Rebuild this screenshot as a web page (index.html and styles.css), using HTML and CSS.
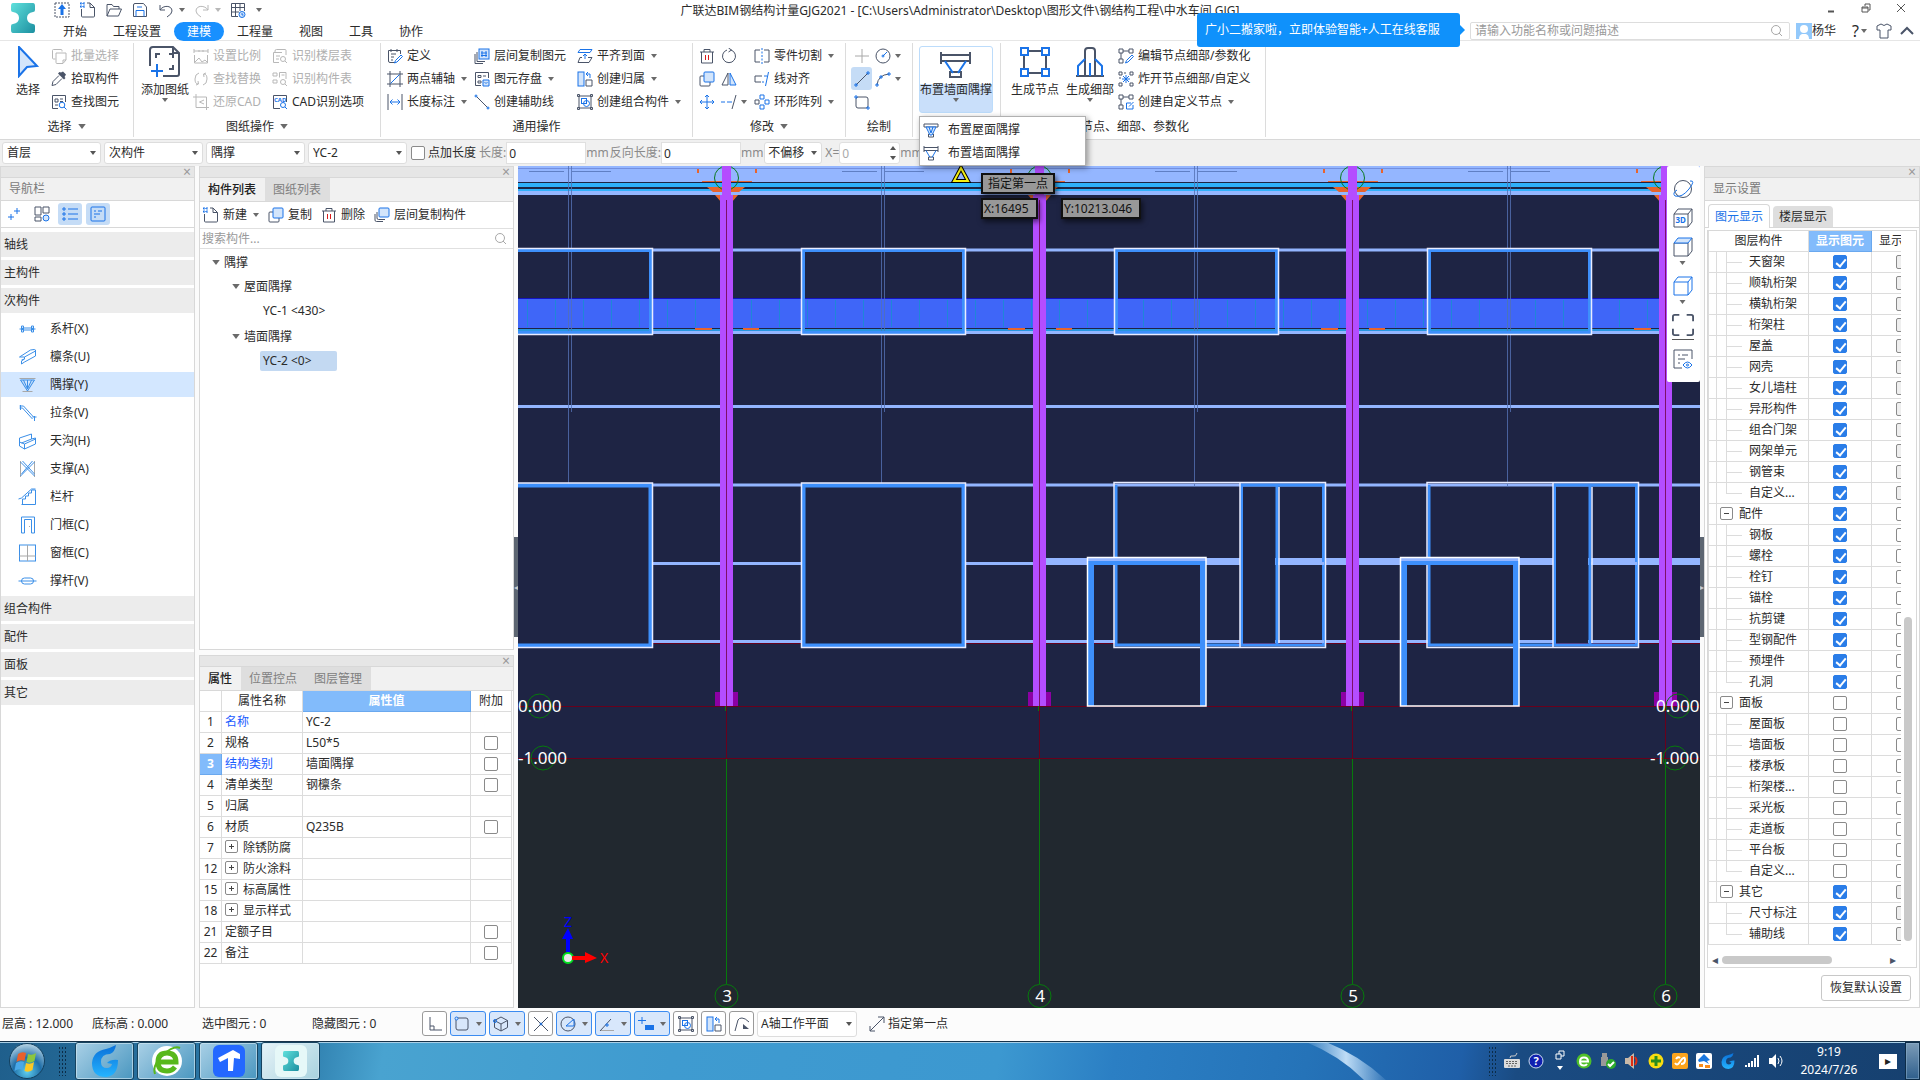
FILE: index.html
```html
<!DOCTYPE html>
<html lang="zh-CN">
<head>
<meta charset="utf-8">
<title>广联达BIM钢结构计量GJG2021</title>
<link rel="stylesheet" href="styles.css">
</head>
<body>
<svg class="defs" aria-hidden="true">
  <defs>
    <linearGradient id="teal" x1="0" y1="0" x2="1" y2="1"><stop offset="0" stop-color="#5fe0dc"/><stop offset="1" stop-color="#1c8fa0"/></linearGradient>
    <linearGradient id="gblue" x1="0" y1="0" x2="0" y2="1"><stop offset="0" stop-color="#0a6fd8"/><stop offset="1" stop-color="#25b4ff"/></linearGradient>
    <radialGradient id="orb" cx=".5" cy=".8" r=".8"><stop offset="0" stop-color="#5fd0f0"/><stop offset=".5" stop-color="#1f6ea8"/><stop offset="1" stop-color="#b9d6e6"/></radialGradient>
    <symbol id="beam" viewBox="0 0 24 30"><path fill="url(#teal)" d="M2 0h20q2 0 2 3v4q0 2-2 2-6 1-6 6t6 6q2 0 2 2v4q0 3-2 3H2q-2 0-2-3v-4q0-2 2-2 6-1 6-6T2 9Q0 9 0 7V3q0-3 2-3z"/></symbol>
    <symbol id="down" viewBox="0 0 6 4"><path fill="currentColor" d="M0 0h6L3 4z"/></symbol>
    <symbol id="i-up" viewBox="0 0 16 16"><rect class="k" x="1" y="1" width="14" height="14" stroke-dasharray="2 1"/><path class="s" d="M8 2l4 5H9.500v6h-3V7H4z"/></symbol>
    <symbol id="i-new" viewBox="0 0 16 16"><path class="k" d="M1.500 7v7q0 1 1 1h11q1 0 1-1V5.500L10 1H7M10 1v4.500h4.500"/><path class="a" d="M0 1.500h5M0 4.500h5M1 0v6M4 0v6" stroke-dasharray="1.500 .8"/></symbol>
    <symbol id="i-open" viewBox="0 0 16 16"><path class="k" d="M1 14V2.500h5l1.500 2H13V7M1 14L4 7h11.500l-3 7z"/></symbol>
    <symbol id="i-save" viewBox="0 0 16 16"><path class="k" d="M1.500 3q0-1.500 1.500-1.500h8.500l3 3.500v9.500h-13z"/><path class="a" d="M4 14.500v-6h8v6M5 5h5"/></symbol>
    <symbol id="i-undo" viewBox="0 0 16 16"><path class="k w" d="M2 3v5h5M2 8c3-5 12-5 12 1q0 3-5 6"/></symbol>
    <symbol id="i-redo" viewBox="0 0 16 16"><path class="k w" d="M14 3v5H9M14 8C11 3 2 3 2 9q0 3 5 6"/></symbol>
    <symbol id="i-grid" viewBox="0 0 16 16"><path class="k" d="M8 14.500H1.500v-13h13V9M1.500 5.500h13M1.500 10H9M5.500 1.500v13M10 1.500V9"/><circle class="a lf" cx="12" cy="12.500" r="3"/><path class="a" d="M12 11v2h1.500"/></symbol>
    <symbol id="i-cursor" viewBox="0 0 32 32"><path class="a w lf" d="M7 1l18 19-10 1-8 9z"/></symbol>
    <symbol id="i-multi" viewBox="0 0 16 16"><path class="k" d="M4.500 11H2.500q-1 0-1-1V2.500q0-1 1-1H10q1 0 1 1v1"/><path class="k" d="M5 5h10v7l-3 3.500H6q-1 0-1-1zM12 15v-3h3"/></symbol>
    <symbol id="i-pick" viewBox="0 0 16 16"><path class="kf" d="M10 1.500l2-1 3 3-1.500 2.500 1 1-1.500 1.500L7 2.500 8.500 1z"/><path class="k" d="M8 4.500L2 10.500l-1 4 4-1 6-6"/></symbol>
    <symbol id="i-find" viewBox="0 0 16 16"><path class="k" d="M7 14.500H1.500v-13h13V8M4 5h3v3H4zM9 5h3M9 7.500h3M4 11h3"/><circle class="a" cx="11" cy="11" r="2.800"/><path class="a" d="M13 13l2.500 2.500"/></symbol>
    <symbol id="i-add" viewBox="0 0 32 32"><path class="k w" d="M14 30H18M1 20V4q0-3 3-3h20l6 6v21q0 2-2 2H18M24 1v6h6"/><path class="k w" d="M7 12V8h4M20 8h4v4M24 19v4h-4"/><path class="a w" d="M8 18v13M2 25h12"/></symbol>
    <symbol id="i-scale" viewBox="0 0 16 16"><path class="k" d="M1 3h14M1 1v4M15 1v4M6 2v2M10 2v2M1.500 7v8h13V7M2 14l4-4 3 4 3-2 2 2"/></symbol>
    <symbol id="i-swap" viewBox="0 0 16 16"><path class="k" d="M6 2Q2 3 2 8t3 5M3 14l2.500-1L5 10M10 14q4-1 4-6t-3-5M13 2l-2.500 1L11 6"/></symbol>
    <symbol id="i-crop" viewBox="0 0 16 16"><path class="k" d="M3 0v13.500h13M0 3h13.500v13M11 6L6.500 8 11 10"/></symbol>
    <symbol id="i-sheet" viewBox="0 0 16 16"><path class="k" d="M3 4.500V3q0-1.500 1.500-1.500H13q1 0 1 1V7M7 14.500H1.500v-10H10M4 8h4M4 11h3"/><circle class="k" cx="11" cy="11" r="2.500"/><path class="k" d="M13 13l2 2"/></symbol>
    <symbol id="i-comp" viewBox="0 0 16 16"><path class="k" d="M1 2h4v3H1zM1 9h4v3H1zM7.500 1.500H14V8M7.500 1.500v5M9.500 4h3"/><circle class="k" cx="11" cy="11" r="2.500"/><path class="k" d="M13 13l2 2"/></symbol>
    <symbol id="i-cad" viewBox="0 0 16 16"><path class="k" d="M8 14.500H1.500v-13h13V8"/><text class="mini" x="2" y="7.500">CAD</text><circle class="a" cx="11" cy="11" r="2.500"/><path class="a" d="M13 13l2 2"/></symbol>
    <symbol id="i-def" viewBox="0 0 16 16"><path class="k" d="M8 14.500H3q-1.500 0-1.500-1.500V2.500h12V6M4 6h5M4 9h3M4 12h2M4 1v3M10 1v3"/><path class="a" d="M14 7l1.500 1.500L10 14l-2.500 1 1-2.500z"/></symbol>
    <symbol id="i-axis" viewBox="0 0 16 16"><path class="k" d="M3 0v16M0 3h16M0 13h16M13 0v16"/><path class="a w" d="M3.500 12.500l9-9"/></symbol>
    <symbol id="i-dim" viewBox="0 0 16 16"><path class="k" d="M1 0v16M15 0v16"/><path class="a w" d="M3 8h10M5.500 5.500L3 8l2.500 2.500M10.500 5.500L13 8l-2.500 2.500"/></symbol>
    <symbol id="i-layers" viewBox="0 0 16 16"><path class="k" d="M3 4v9.500h8M1 6v9.500h8"/><rect class="a lf" x="5" y="1" width="10" height="10"/><path class="a" d="M8 3v6M12 3v6M7 5h6M7 7.500h6"/></symbol>
    <symbol id="i-layers2" viewBox="0 0 16 16"><path class="k" d="M3 5v6q0 1.500 1.500 1.500H11M1 7v6q0 1.500 1.500 1.500H9"/><rect class="a lf" x="5" y="1" width="10" height="9" rx="1"/></symbol>
    <symbol id="i-store" viewBox="0 0 16 16"><path class="k" d="M7 14.500H1.500v-13h13V7M4 4.500h3v2H4zM4 10h3v2H4zM9 5h3"/><path class="a lf" d="M9 9h6v6H9zM10.500 11l1.500 1.500L13.500 11"/></symbol>
    <symbol id="i-aux" viewBox="0 0 16 16"><path class="k" d="M2 2l12 12"/><circle class="a lf" cx="2" cy="2" r="1"/><circle class="a lf" cx="14" cy="14" r="1"/></symbol>
    <symbol id="i-align" viewBox="0 0 16 16"><path class="a" d="M3 1.500h12l-2 3H1z"/><path class="a" d="M8 11V6M6 8l2-2 2 2"/><path class="k" d="M5 9.500H3l-2 5h11l3-5h-4"/></symbol>
    <symbol id="i-belong" viewBox="0 0 16 16"><rect class="a lf" x="1" y="1" width="6" height="14"/><path class="k" d="M9 15V9h6v6z"/><path class="a" d="M9 3h4v4M11 1L9 3l2 2"/></symbol>
    <symbol id="i-combo" viewBox="0 0 16 16"><rect class="k" x="2" y="2" width="12" height="12"/><path class="k" d="M.5.500h2v2h-2zM13.500.500h2v2h-2zM.5 13.500h2v2h-2zM13.500 13.500h2v2h-2z"/><rect class="a" x="4.500" y="4.500" width="5" height="5"/><circle class="a" cx="9.500" cy="9.500" r="3"/></symbol>
    <symbol id="i-trash" viewBox="0 0 16 16"><path class="k" d="M1 4h14M5 4V1.500h6V4M2.500 4v11h11V4"/><path class="r" d="M6.500 7v5M9.500 7v5"/></symbol>
    <symbol id="i-rot" viewBox="0 0 16 16"><path class="k" d="M10 2A6.500 6.500 0 1 1 6 2M7.500 0l3 2-3 2"/></symbol>
    <symbol id="i-copy" viewBox="0 0 16 16"><path class="k" d="M5 5H2q-1 0-1 1v8q0 1 1 1h8q1 0 1-1v-3"/><rect class="a lf" x="5" y="1" width="10" height="10" rx="1"/></symbol>
    <symbol id="i-mirror" viewBox="0 0 16 16"><path class="k" d="M7 2v12H1z"/><path class="a lf" d="M9 2v12h6z"/></symbol>
    <symbol id="i-move" viewBox="0 0 16 16"><path class="a" d="M8 1v14M1 8h14M6 3l2-2 2 2M6 13l2 2 2-2M3 6L1 8l2 2M13 6l2 2-2 2"/></symbol>
    <symbol id="i-ext" viewBox="0 0 16 16"><path class="a" d="M0 8h4M6 8h5"/><path class="k" d="M15 1l-4 14"/></symbol>
    <symbol id="i-cut" viewBox="0 0 16 16"><path class="k" d="M6 2H1v12h5M10 2h5v12h-5"/><path class="a" d="M8 0v16" stroke-dasharray="2 1.500"/></symbol>
    <symbol id="i-line" viewBox="0 0 16 16"><path class="k" d="M8 5H1v6h6"/><path class="a" d="M10 5h3M14.500 1l-3 14M8 11h2"/></symbol>
    <symbol id="i-ring" viewBox="0 0 16 16"><path class="a" d="M6 1h4v4H6zM11 6h4v4h-4zM6 11h4v4H6z"/><path class="k" d="M1 6h4v4H1z"/></symbol>
    <symbol id="i-pt" viewBox="0 0 16 16"><path class="g" d="M8 1v14M1 8h14"/></symbol>
    <symbol id="i-circ" viewBox="0 0 16 16"><circle class="k" cx="8" cy="8" r="7"/><path class="a" d="M8 8l4-4"/><circle class="a" cx="8" cy="8" r="1"/></symbol>
    <symbol id="s-circ" viewBox="0 0 16 16"><circle class="k" cx="8" cy="8" r="7"/><path class="a" d="M6 10l8-7v7H6"/></symbol>
    <symbol id="i-seg" viewBox="0 0 16 16"><path class="k" d="M2 14L14 2"/><path class="a" d="M1 13h2v2H1zM13 1h2v2h-2z"/></symbol>
    <symbol id="i-arc" viewBox="0 0 16 16"><path class="k" d="M2 14Q3 4 14 3"/><path class="a" d="M1 13h2v2H1zM5 5h2v2H5zM13 2h2v2h-2z"/></symbol>
    <symbol id="i-rect" viewBox="0 0 16 16"><rect class="k" x="2" y="3" width="12" height="11" rx="2"/><path class="a" d="M1 2h2v2H1zM13 13h2v2h-2z"/></symbol>
    <symbol id="i-brace" viewBox="0 0 32 32"><path class="k w" d="M1 5v12M30 5v12M1 8h29M1 14h29M10 25h11v5H10z"/><path class="a w" d="M5 14l8 12M26 14l-8 12"/></symbol>
    <symbol id="i-brace2" viewBox="0 0 16 16"><path class="k" d="M1 2h14v3H1zM5.500 15h5v-3h-5z"/><path class="a lf" d="M3 5l4 8h2l4-8zM6 5l2 6 2-6"/></symbol>
    <symbol id="i-brace3" viewBox="0 0 16 16"><path class="k" d="M1 1v6M15 1v6M1 2.500h14M1 5.500h14M5.500 12h5v3h-5z"/><path class="a" d="M3 5.500l4 7M13 5.500l-4 7"/></symbol>
    <symbol id="i-node" viewBox="0 0 32 32"><path class="k w" d="M9 5h14M5 9v14M27 9v14M9 27h14"/><path class="a w" d="M2 2h7v7H2zM23 2h7v7h-7zM2 23h7v7H2zM23 23h7v7h-7z"/></symbol>
    <symbol id="i-detail" viewBox="0 0 32 32"><path class="k w" d="M2 30h28M11 30V5q0-3 3-3h4q3 0 3 3v25"/><path class="a w" d="M4 30V20l7-7M28 30V20l-7-7M16 17v13"/></symbol>
    <symbol id="i-edn" viewBox="0 0 16 16"><path class="k" d="M1 1h4v4H1zM11 1h4v4h-4zM1 11h4v4H1zM5 3h6M3 5v6"/><path class="a" d="M14 7l1.500 1.500L10 14l-2.500 1 1-2.500z"/></symbol>
    <symbol id="i-cdn" viewBox="0 0 16 16"><path class="k" d="M1 1h4v4H1zM11 1h4v4h-4zM1 11h4v4H1zM5 3h6M3 5v6"/><path class="a" d="M13 9H8.500v6H15v-4M11 12.500L15.500 8"/></symbol>
    <symbol id="i-exn" viewBox="0 0 16 16"><path class="k" d="M1 1h3v3H1zM12 1h3v3h-3zM1 12h3v3H1zM12 12h3v3h-3zM6 2h2M2 6v2"/><path class="a" d="M5 5l6 6M11 5l-6 6M8 4v8M4 8h8"/></symbol>
    <symbol id="i-q" viewBox="0 0 16 16"><circle class="g" cx="7" cy="7" r="4.500"/><path class="g" d="M10 10l3 3"/></symbol>
    <symbol id="i-shirt" viewBox="0 0 16 16"><path class="k" d="M5 1q3 3 6 0l4 2v4h-3v8H4V7H1V3z"/></symbol>
    <symbol id="i-cards" viewBox="0 0 16 16"><path class="k" d="M1 1h6v8H1zM9 1h6v6H9zM1 11h6v4H1z"/><circle class="a lf" cx="12" cy="12" r="3"/></symbol>
    <symbol id="i-list" viewBox="0 0 16 16"><path class="a" d="M6 3h10M6 8h10M6 13h10M1 2h2v2H1zM1 7h2v2H1zM1 12h2v2H1z"/></symbol>
    <symbol id="i-doc" viewBox="0 0 16 16"><rect class="a" x="1" y="1" width="14" height="14" rx="1"/><path class="a" d="M4 5h2M8 5h4M4 8h6M4 11h2"/></symbol>
    <symbol id="i-plus2" viewBox="0 0 16 16"><path class="a" d="M11 2v6M8 5h6M5 8v6M2 11h6"/></symbol>
    <symbol id="n1" viewBox="0 0 18 18"><path class="n" d="M1 9h2M15 9h2M4 8h10v2H4zM3 6h2v6H3zM13 6h2v6h-2z"/></symbol>
    <symbol id="n2" viewBox="0 0 18 18"><path class="n" d="M1 9L12 2q5-1 5 0v6L6 14l-3 2v-3l3-2-3 1M1 9h5v2M6 9l11-6"/></symbol>
    <symbol id="n3" viewBox="0 0 18 18"><path class="g" d="M1 2.500h16M4 15.500h10"/><path class="n nf" d="M2 4h14L9 15zM5 4l4 9 4-9M9 4v9"/></symbol>
    <symbol id="n4" viewBox="0 0 18 18"><path class="n" d="M1 2h4l10 11M1 4h3l10 11M2 1v5M16 12v5M14 13h4"/></symbol>
    <symbol id="n5" viewBox="0 0 18 18"><path class="n" d="M1 6l12-4v5l4-1v6l-11 5-5-3zM1 10l5 2 11-5M6 12v5M13 7L3 11"/></symbol>
    <symbol id="n6" viewBox="0 0 18 18"><path class="g" d="M2 1v16M16 1v16"/><path class="n" d="M2 2l14 14M4 1l12 13M16 2L2 16M14 1L3 14"/></symbol>
    <symbol id="n7" viewBox="0 0 18 18"><path class="n" d="M3 16.500h14V2h-4v3h-3v3H7v3H4v5M0 11l3-1L13 1h4"/></symbol>
    <symbol id="n8" viewBox="0 0 18 18"><path class="n" d="M3 17V1h13v16h-3V3.500H6V17z"/><path class="g" d="M11 10v1"/></symbol>
    <symbol id="n9" viewBox="0 0 18 18"><rect class="n" x="1" y="1" width="16" height="16"/><path class="g" d="M9 1v16M1 12h16"/></symbol>
    <symbol id="n10" viewBox="0 0 18 18"><path class="n" d="M0 9h18"/><rect class="n" x="3" y="6" width="12" height="6" rx="3"/></symbol>
    <symbol id="v-orb" viewBox="0 0 22 22"><circle class="k" cx="11" cy="11" r="8.500"/><path class="a w" d="M18 3q6-1-1 8t-14 7q-3-3 2-6"/></symbol>
    <symbol id="v-cube" viewBox="0 0 22 22"><path class="k w" d="M2 7h14v13H2zM2 7l4-5h14v13l-4 5M16 7l4-5"/></symbol>
    <symbol id="v-top" viewBox="0 0 22 22"><path class="k" d="M2 7h14v13H2zM20 2v13l-4 5"/><path class="a lf" d="M2 7l4-5h14l-4 5z"/></symbol>
    <symbol id="v-exp" viewBox="0 0 24 24"><path class="k w" d="M1 8V3q0-2 2-2h5M16 1h5q2 0 2 2v5M23 16v5q0 2-2 2h-5M8 23H3q-2 0-2-2v-5"/></symbol>
    <symbol id="v-eye" viewBox="0 0 22 22"><path class="k" d="M10 20H2V2h18v9M6 7h2M10 7h6M6 11h7M6 15h2"/><path class="a" d="M11 17q4.500-6 9 0-4.500 6-9 0z"/><circle class="a" cx="15.500" cy="17" r="1"/></symbol>
    <symbol id="s-l" viewBox="0 0 16 16"><path class="k" d="M3 1v13h12M3 10h4v4"/></symbol>
    <symbol id="s-sq" viewBox="0 0 16 16"><rect class="k" x="2" y="2" width="12" height="12" rx="2"/><circle class="a lf" cx="2.500" cy="2.500" r="1.500"/></symbol>
    <symbol id="s-cube" viewBox="0 0 16 16"><path class="k" d="M8 1l6.500 3.500v7L8 15l-6.500-3.500v-7zM1.500 4.500L8 8l6.500-3.500M8 8v7"/><circle class="a" cx="2" cy="5" r="1.500"/></symbol>
    <symbol id="s-x" viewBox="0 0 16 16"><path class="k" d="M1 1l14 14M15 1L1 15"/><circle class="a" cx="8" cy="8" r="1"/></symbol>
    <symbol id="s-ang" viewBox="0 0 16 16"><path class="k" d="M1 15L12 3"/><path class="a" d="M7 8h2v2H7z"/><path class="g" d="M2 14.500h13"/></symbol>
    <symbol id="s-pl" viewBox="0 0 16 16"><path class="a" d="M4 1v7M0 4.500h8"/><path class="s" d="M7 9h9v5H7z"/></symbol>
    <symbol id="s-poly" viewBox="0 0 16 16"><path class="k" d="M1 15L4 4q1-2 4-2t7 4"/><path class="kf" d="M9 8l6 5H9z"/></symbol>
    <symbol id="s-pt" viewBox="0 0 16 16"><path class="k" d="M1 15L15 1M9 1h6v6M1 10v5h5"/></symbol>

    <g id="bay">
      <path stroke="#5471b4" opacity=".8" d="M568.500 166V491M571.500 166V412"/>
      <path stroke="#5f7fc4" d="M529 171.500h35M572 171.500h39"/>
      <g fill="#e8642c"><path d="M707 187h38l-6 5h-26zM715 195h23l-6 7h-11z"/><path d="M695 328h17v2h-17zM743 328h16v2h-16zM697 169h2v4h-2zM755 169h2v4h-2zM702 181h50v1h-50z"/></g>
      <ellipse cx="726.500" cy="178" rx="12" ry="12" fill="none" stroke="#0a7a1e"/>
      <path fill="#b44dff" d="M720 195h13v511h-13zM722 166h9v30h-9z"/>
      <path stroke="#7d0f68" d="M726.500 200V706"/>
      <path fill="#8c00a4" d="M715 692h5v14h-5zM733 692h5v14h-5z"/>
      <path stroke="#68001c" d="M726.500 706V759"/><path stroke="#067a0c" d="M726.500 759V984M725.500 706v5"/>
      <circle cx="726.500" cy="996" r="11.500" fill="none" stroke="#067a0c"/>
    </g>
    <g id="win" fill="none"><path stroke="#3d8ffb" stroke-width="3" d="M803.500 250.500h160v82h-160z"/><path stroke="#e9ecff" stroke-width="1.500" d="M801.500 248.500h164v86h-164z"/></g>
    <g id="lowwin"><path fill="#1e2444" stroke="#3d8ffb" stroke-width="4" d="M803.500 485.500h160v160h-160z"/><path fill="none" stroke="#e9ecff" stroke-width="1.500" d="M801.500 483h164v164.500h-164z"/></g>
    <g id="doors" fill="none">
      <path fill="#1e2444" d="M1114 487h126v71h-126zM1117 566h120v79h-120z"/>
      <path stroke="#3d8ffb" stroke-width="3" d="M1116 485V645H1240M1241.500 485h82v160h-82zM1277 485V645"/>
      <path fill="#1e2444" d="M1243 487h32v156h-32z"/>
      <path stroke="#93b5ff" stroke-width="7" d="M1206 561.500h34"/>
      <path stroke="#93b5ff" stroke-width="3" d="M1278 563.500h46M1206 641.500h34M1278 641.500h46"/>
      <path stroke="#e9ecff" stroke-width="1.500" d="M1240 482.500H1114V647.500H1325.500V482.500H1240V647M1279 487V643"/>
      <path stroke="#3d8ffb" stroke-width="6" d="M1091 706V562H1203V706"/>
      <path stroke="#93b5ff" stroke-width="3" d="M1088 559.500H1206"/>
      <path stroke="#ffffff" stroke-width="1.500" d="M1087.500 706V557.500H1206V706z"/>
    </g>
    <pattern id="ticks" x="527" y="300" width="28" height="28" patternUnits="userSpaceOnUse"><path stroke="#1f86d8" d="M.5 0V27"/></pattern>
    <linearGradient id="glow"><stop offset="0" stop-color="#bfe0fb" stop-opacity=".1"/><stop offset=".5" stop-color="#cfe8fd" stop-opacity=".9"/><stop offset="1" stop-color="#bfe0fb" stop-opacity=".1"/></linearGradient>
  </defs>
</svg>

<header class="title">
  <svg class="logo"><use href="#beam"/></svg>
  <div class="title-main">
    <div class="quick">
      <button aria-label="上传"><svg><use href="#i-up"/></svg></button>
      <button aria-label="新建"><svg><use href="#i-new"/></svg></button>
      <button aria-label="打开"><svg><use href="#i-open"/></svg></button>
      <button aria-label="保存"><svg><use href="#i-save"/></svg></button>
      <button class="has-arrow" aria-label="撤销"><svg><use href="#i-undo"/></svg><svg class="dn"><use href="#down"/></svg></button>
      <button class="has-arrow off" aria-label="恢复"><svg><use href="#i-redo"/></svg><svg class="dn"><use href="#down"/></svg></button>
      <button aria-label="表格"><svg><use href="#i-grid"/></svg></button>
      <button aria-label="更多"><svg class="dn"><use href="#down"/></svg></button>
    </div>
    <nav class="tabs">
      <button>开始</button><button>工程设置</button><button class="on">建模</button><button>工程量</button><button>视图</button><button>工具</button><button>协作</button>
    </nav>
  </div>
  <h1>广联达BIM钢结构计量GJG2021 - [C:\Users\Administrator\Desktop\图形文件\钢结构工程\中水车间.GJG]</h1>
  <div class="title-right">
    <div class="winbtns"><button aria-label="最小化"><svg viewBox="0 0 12 12"><path d="M3 9.500h6" stroke-width="2"/></svg></button><button aria-label="还原"><svg viewBox="0 0 12 12"><path d="M2 5h6v5H2zM2 6h6M5 4V2h5v6H8.500"/></svg></button><button aria-label="关闭"><svg viewBox="0 0 12 12"><path d="M2 2l8 8M10 2l-8 8"/></svg></button></div>
    <div class="userbar">
      <div class="search"><input aria-label="搜索" placeholder="请输入功能名称或问题描述"><svg><use href="#i-q"/></svg></div>
      <button class="user"><svg class="avatar" viewBox="0 0 16 16"><path fill="#93c9fb" d="M0 0h16v16H0z"/><circle cx="8" cy="6" r="4" fill="#fff"/><path fill="#fff" d="M3 16q0-4 3-5h4q3 1 3 5z"/></svg>杨华</button>
      <button class="help">?<svg class="dn"><use href="#down"/></svg></button>
      <button aria-label="皮肤"><svg><use href="#i-shirt"/></svg></button>
      <button aria-label="收起"><svg viewBox="0 0 16 16"><path class="k w" d="M2 11l6-6 6 6"/></svg></button>
    </div>
    <a class="bubble" href="#">广小二搬家啦，立即体验智能+人工在线客服</a>
  </div>
</header>

<section class="ribbon">
  <div class="group g1">
    <div class="body">
      <button class="big"><svg><use href="#i-cursor"/></svg>选择</button>
      <div class="cmds">
        <button class="off"><svg><use href="#i-multi"/></svg>批量选择</button>
        <button><svg><use href="#i-pick"/></svg>拾取构件</button>
        <button><svg><use href="#i-find"/></svg>查找图元</button>
      </div>
    </div>
    <button class="cap">选择<svg class="dn"><use href="#down"/></svg></button>
  </div>
  <div class="group g2">
    <div class="body">
      <button class="big"><svg><use href="#i-add"/></svg>添加图纸<svg class="dn"><use href="#down"/></svg></button>
      <div class="cmds">
        <button class="off"><svg><use href="#i-scale"/></svg>设置比例</button><button class="off"><svg><use href="#i-sheet"/></svg>识别楼层表</button>
        <button class="off"><svg><use href="#i-swap"/></svg>查找替换</button><button class="off"><svg><use href="#i-comp"/></svg>识别构件表</button>
        <button class="off"><svg><use href="#i-crop"/></svg>还原CAD</button><button><svg><use href="#i-cad"/></svg>CAD识别选项</button>
      </div>
    </div>
    <button class="cap">图纸操作<svg class="dn"><use href="#down"/></svg></button>
  </div>
  <div class="group g3">
    <div class="body">
      <div class="cmds">
        <button><svg><use href="#i-def"/></svg>定义</button><button><svg><use href="#i-layers"/></svg>层间复制图元</button><button><svg><use href="#i-align"/></svg>平齐到面<svg class="dn"><use href="#down"/></svg></button>
        <button><svg><use href="#i-axis"/></svg>两点辅轴<svg class="dn"><use href="#down"/></svg></button><button><svg><use href="#i-store"/></svg>图元存盘<svg class="dn"><use href="#down"/></svg></button><button><svg><use href="#i-belong"/></svg>创建归属<svg class="dn"><use href="#down"/></svg></button>
        <button><svg><use href="#i-dim"/></svg>长度标注<svg class="dn"><use href="#down"/></svg></button><button><svg><use href="#i-aux"/></svg>创建辅助线</button><button><svg><use href="#i-combo"/></svg>创建组合构件<svg class="dn"><use href="#down"/></svg></button>
      </div>
    </div>
    <div class="cap low">通用操作</div>
  </div>
  <div class="group g4">
    <div class="body">
      <div class="cmds">
        <button aria-label="删除"><svg><use href="#i-trash"/></svg></button><button aria-label="旋转"><svg><use href="#i-rot"/></svg></button><button><svg><use href="#i-cut"/></svg>零件切割<svg class="dn"><use href="#down"/></svg></button>
        <button aria-label="复制"><svg><use href="#i-copy"/></svg></button><button aria-label="镜像"><svg><use href="#i-mirror"/></svg></button><button><svg><use href="#i-line"/></svg>线对齐</button>
        <button aria-label="移动"><svg><use href="#i-move"/></svg></button><button class="tight" aria-label="延伸"><svg><use href="#i-ext"/></svg><svg class="dn"><use href="#down"/></svg></button><button><svg><use href="#i-ring"/></svg>环形阵列<svg class="dn"><use href="#down"/></svg></button>
      </div>
    </div>
    <button class="cap">修改<svg class="dn"><use href="#down"/></svg></button>
  </div>
  <div class="group g5">
    <div class="body">
      <div class="cmds">
        <button class="sq" aria-label="点"><svg><use href="#i-pt"/></svg></button><button class="tight" aria-label="圆"><svg><use href="#i-circ"/></svg><svg class="dn"><use href="#down"/></svg></button>
        <button class="sq on" aria-label="直线"><svg><use href="#i-seg"/></svg></button><button class="tight" aria-label="弧"><svg><use href="#i-arc"/></svg><svg class="dn"><use href="#down"/></svg></button>
        <button class="sq" aria-label="矩形"><svg><use href="#i-rect"/></svg></button>
      </div>
    </div>
    <div class="cap low">绘制</div>
  </div>
  <div class="group g6">
    <div class="body"><button class="big open"><svg><use href="#i-brace"/></svg>布置墙面隅撑<svg class="dn"><use href="#down"/></svg></button></div>
    <div class="menu"><button><svg><use href="#i-brace2"/></svg>布置屋面隅撑</button><button><svg><use href="#i-brace3"/></svg>布置墙面隅撑</button></div>
  </div>
  <div class="group g7">
    <div class="body">
      <button class="big"><svg><use href="#i-node"/></svg>生成节点</button>
      <button class="big"><svg><use href="#i-detail"/></svg>生成细部<svg class="dn"><use href="#down"/></svg></button>
      <div class="cmds">
        <button><svg><use href="#i-edn"/></svg>编辑节点细部/参数化</button>
        <button><svg><use href="#i-exn"/></svg>炸开节点细部/自定义</button>
        <button><svg><use href="#i-cdn"/></svg>创建自定义节点<svg class="dn"><use href="#down"/></svg></button>
      </div>
    </div>
    <div class="cap low">节点、细部、参数化</div>
  </div>
</section>

<section class="options">
  <select class="combo" aria-label="楼层"><option>首层</option></select>
  <select class="combo" aria-label="类别"><option>次构件</option></select>
  <select class="combo" aria-label="构件类型"><option>隅撑</option></select>
  <select class="combo" aria-label="构件"><option>YC-2</option></select>
  <label class="chk"><input type="checkbox">点加长度</label>
  <label class="num">长度:<input value="0"></label><span>mm</span>
  <label class="num">反向长度:<input value="0"></label><span>mm</span>
  <select class="combo small" aria-label="偏移"><option>不偏移</option></select>
  <label class="num spin">X=<input value="0" disabled></label><span>mm</span>
</section>

<main>
  <aside class="panel nav">
    <div class="strip"><button aria-label="关闭">×</button></div>
    <h2>导航栏</h2>
    <div class="navtools">
      <button aria-label="展开"><svg><use href="#i-plus2"/></svg></button>
      <button aria-label="图标"><svg><use href="#i-cards"/></svg></button>
      <button class="on" aria-label="列表"><svg><use href="#i-list"/></svg></button>
      <button class="on" aria-label="详情"><svg><use href="#i-doc"/></svg></button>
    </div>
    <div class="navlist">
      <button class="cat">轴线</button><button class="cat">主构件</button><button class="cat">次构件</button>
      <button><svg><use href="#n1"/></svg>系杆(X)</button>
      <button><svg><use href="#n2"/></svg>檩条(U)</button>
      <button class="sel"><svg><use href="#n3"/></svg>隅撑(Y)</button>
      <button><svg><use href="#n4"/></svg>拉条(V)</button>
      <button><svg><use href="#n5"/></svg>天沟(H)</button>
      <button><svg><use href="#n6"/></svg>支撑(A)</button>
      <button><svg><use href="#n7"/></svg>栏杆</button>
      <button><svg><use href="#n8"/></svg>门框(C)</button>
      <button><svg><use href="#n9"/></svg>窗框(C)</button>
      <button><svg><use href="#n10"/></svg>撑杆(V)</button>
      <button class="cat">组合构件</button><button class="cat">配件</button><button class="cat">面板</button><button class="cat">其它</button>
    </div>
  </aside>

  <div class="mid">
    <section class="panel comps">
      <div class="strip"><button aria-label="关闭">×</button></div>
      <div class="ptabs"><button class="on">构件列表</button><button>图纸列表</button></div>
      <div class="ctools">
        <button><svg><use href="#i-new"/></svg>新建<svg class="dn"><use href="#down"/></svg></button>
        <button><svg><use href="#i-copy"/></svg>复制</button>
        <button><svg><use href="#i-trash"/></svg>删除</button>
        <button><svg><use href="#i-layers2"/></svg>层间复制构件</button>
      </div>
      <div class="csearch"><input aria-label="搜索构件" placeholder="搜索构件..."><svg><use href="#i-q"/></svg></div>
      <ul class="tree">
        <li><svg class="dn"><use href="#down"/></svg>隅撑
          <ul>
            <li><svg class="dn"><use href="#down"/></svg>屋面隅撑<ul><li class="leaf"><span>YC-1 &lt;430&gt;</span></li></ul></li>
            <li><svg class="dn"><use href="#down"/></svg>墙面隅撑<ul><li class="leaf"><span class="sel">YC-2 &lt;0&gt;</span></li></ul></li>
          </ul>
        </li>
      </ul>
    </section>
    <section class="panel props">
      <div class="strip"><button aria-label="关闭">×</button></div>
      <div class="ptabs"><button class="on">属性</button><button>位置控点</button><button>图层管理</button></div>
      <table>
        <colgroup><col class="c-no"><col class="c-name"><col><col class="c-add"></colgroup>
        <thead><tr><th></th><th>属性名称</th><th class="hl">属性值</th><th>附加</th></tr></thead>
        <tbody>
          <tr><td>1</td><td class="blue">名称</td><td>YC-2</td><td></td></tr>
          <tr><td>2</td><td>规格</td><td>L50*5</td><td><input type="checkbox" aria-label="规格附加"></td></tr>
          <tr><td class="hl">3</td><td class="blue">结构类别</td><td>墙面隅撑</td><td><input type="checkbox" aria-label="结构类别附加"></td></tr>
          <tr><td>4</td><td>清单类型</td><td>钢檩条</td><td><input type="checkbox" aria-label="清单类型附加"></td></tr>
          <tr><td>5</td><td>归属</td><td></td><td></td></tr>
          <tr><td>6</td><td>材质</td><td>Q235B</td><td><input type="checkbox" aria-label="材质附加"></td></tr>
          <tr><td>7</td><td><button class="box plus" aria-label="展开"></button>除锈防腐</td><td></td><td></td></tr>
          <tr><td>12</td><td><button class="box plus" aria-label="展开"></button>防火涂料</td><td></td><td></td></tr>
          <tr><td>15</td><td><button class="box plus" aria-label="展开"></button>标高属性</td><td></td><td></td></tr>
          <tr><td>18</td><td><button class="box plus" aria-label="展开"></button>显示样式</td><td></td><td></td></tr>
          <tr><td>21</td><td>定额子目</td><td></td><td><input type="checkbox" aria-label="定额子目附加"></td></tr>
          <tr><td>22</td><td>备注</td><td></td><td><input type="checkbox" aria-label="备注附加"></td></tr>
        </tbody>
      </table>
    </section>
  </div>

  <div class="splitter"><button aria-label="折叠左侧">◂</button></div>

  <div class="canvas">
    <svg class="scene" viewBox="518 166 1182 842" preserveAspectRatio="xMinYMin slice">
      <path fill="#21282f" d="M518 166h1182v842H518z"/>
      <path fill="#1e2444" d="M518 166h1182v593H518z"/>
      <path fill="#94b6ff" d="M518 166h1182v16H518zM518 191h1182v4H518z"/>
      <path stroke="#7390e0" d="M518 168.500h1182"/>
      <path fill="#2fb0fa" d="M518 183h1182v4H518zM518 189h1182v2H518z"/>
      <path fill="#3f66f8" d="M518 299h1182v29H518z"/>
      <path fill="url(#ticks)" d="M518 300h1182v27H518z"/>
      <path stroke="#1414c0" d="M518 298.500h1182"/>
      <path stroke="#2696e0" stroke-width="2" d="M518 330h1182"/>
      <path stroke="#93b5ff" stroke-width="3" d="M518 250h1182M518 332.500h1182M518 406.500h1182M518 485h1182M518 563.500h1182M518 641.500h1182"/>
      <path stroke="#93b5ff" stroke-width="7" d="M1040 561.500h660"/>
      <path stroke="#68001c" d="M518 706.500h1182M518 758.500h1182M652 643.500h150M966 643.500h734"/>
      <use href="#bay"/><use href="#bay" x="313"/><use href="#bay" x="626"/><use href="#bay" x="939"/>
      <use href="#win" x="-313"/><use href="#win"/><use href="#win" x="313"/><use href="#win" x="626"/>
      <use href="#lowwin" x="-313"/><use href="#lowwin"/>
      <use href="#doors"/><use href="#doors" x="313"/>
      <g fill="none" stroke="#067a0c"><circle cx="539.500" cy="706" r="12"/><circle cx="543" cy="758" r="12"/><circle cx="1678" cy="706" r="12"/><circle cx="1675" cy="758" r="12"/></g>
      <g class="lab"><text x="518" y="712">0.000</text><text x="518" y="764">-1.000</text><text x="1656" y="712">0.000</text><text x="1650" y="764">-1.000</text></g>
      <g class="lab mid-t"><text x="727" y="1002">3</text><text x="1040" y="1002">4</text><text x="1353" y="1002">5</text><text x="1666" y="1002">6</text></g>
      <path fill="none" stroke="#000" stroke-width="4" d="M961 168l-7 13h14z"/><path fill="none" stroke="#f4f014" stroke-width="2" d="M961 168l-7 13h14z"/>
      <circle cx="568" cy="958" r="5" fill="#e8e8e8" stroke="#00e020" stroke-width="2"/>
      <path fill="#0000ff" d="M566 952v-13h-4l6-11 5 11h-3v13z"/><path fill="#ff0000" d="M572 956h13v-4l12 6-12 5v-3h-13z"/>
      <text class="ax z" x="568" y="927">Z</text><text class="ax x" x="604" y="963">X</text>
    </svg>
    <div class="hint h1">指定第一点</div>
    <div class="hint h2">X:16495</div>
    <div class="hint h3">Y:10213.046</div>
    <div class="viewbar">
      <button aria-label="动态观察"><svg><use href="#v-orb"/></svg></button>
      <button class="d3" aria-label="三维"><svg><use href="#v-cube"/></svg><b>3D</b></button>
      <button aria-label="视图"><svg><use href="#v-top"/></svg></button>
      <svg class="dn"><use href="#down"/></svg>
      <button class="fillcube" aria-label="着色"><svg><use href="#v-cube"/></svg></button>
      <svg class="dn"><use href="#down"/></svg>
      <button aria-label="全屏"><svg><use href="#v-exp"/></svg></button>
      <hr>
      <button aria-label="显示设置"><svg><use href="#v-eye"/></svg></button>
    </div>
  </div>

  <div class="splitter"><button aria-label="折叠右侧">▸</button></div>

  <aside class="panel disp">
    <div class="strip"><button aria-label="关闭">×</button></div>
    <h2>显示设置</h2>
    <div class="dtabs"><button class="on">图元显示</button><button>楼层显示</button></div>
    <div class="dbox">
      <div class="dview">
        <div class="dclip">
          <table>
            <colgroup><col class="d1"><col class="d2"><col class="d2"></colgroup>
            <thead><tr><th>图层构件</th><th class="hl">显示图元</th><th class="left">显示</th></tr></thead>
            <tbody id="layers"></tbody>
          </table>
        </div>
        <div class="vbar"><i></i></div>
      </div>
      <div class="hbar"><span>◂</span><i></i><span>▸</span></div>
    </div>
    <button class="reset">恢复默认设置</button>
  </aside>
</main>

<footer class="status">
  <span class="st1">层高 : 12.000</span><span class="st2">底标高 : 0.000</span><span class="st2">选中图元 : 0</span><span class="st2">隐藏图元 : 0</span>
  <div class="snaps">
    <button aria-label="正交"><svg><use href="#s-l"/></svg></button>
    <button class="on" aria-label="矩形"><svg><use href="#s-sq"/></svg><svg class="dn"><use href="#down"/></svg></button>
    <button class="on" aria-label="立方体"><svg><use href="#s-cube"/></svg><svg class="dn"><use href="#down"/></svg></button>
    <button aria-label="交点"><svg><use href="#s-x"/></svg></button>
    <button class="on" aria-label="圆心"><svg><use href="#s-circ"/></svg><svg class="dn"><use href="#down"/></svg></button>
    <button class="on" aria-label="角度"><svg><use href="#s-ang"/></svg><svg class="dn"><use href="#down"/></svg></button>
    <button class="on" aria-label="偏移"><svg><use href="#s-pl"/></svg><svg class="dn"><use href="#down"/></svg></button>
    <button aria-label="组合"><svg><use href="#i-combo"/></svg></button>
    <button aria-label="归属"><svg><use href="#i-belong"/></svg></button>
    <button aria-label="折线"><svg><use href="#s-poly"/></svg></button>
  </div>
  <select class="combo" aria-label="工作平面"><option>A轴工作平面</option></select>
  <span class="prompt"><svg><use href="#s-pt"/></svg>指定第一点</span>
</footer>

<div class="taskbar">
  <button class="start" aria-label="开始"><svg viewBox="0 0 38 38"><circle cx="19" cy="19" r="17.500" fill="url(#orb)" stroke="#12405f"/><path fill="#e8602c" d="M10 12q4-3 8-1l-1.500 8q-4-2-8 1z"/><path fill="#8cc63e" d="M20 12q4 2 8-1l-1.500 8q-4 3-8 1z"/><path fill="#4aa8e8" d="M8 21q4-3 8-1l-1.500 8q-4-2-8 1z"/><path fill="#fcc824" d="M18 21q4 2 8-1l-1.500 8q-4 3-8 1z"/></svg></button>
  <i class="grip"></i>
  <button class="task" aria-label="广联达"><svg viewBox="0 0 32 32"><path fill="url(#gblue)" d="M17 4q4-1 10-4-1 7-6 9-9 0-9 8 0 6 6 6 4 0 5-4l-5-1q4-4 11-3 0 16-12 17Q3 32 3 18 4 6 17 4z"/></svg></button>
  <button class="task" aria-label="浏览器"><svg viewBox="0 0 32 32"><circle cx="16" cy="16" r="15" fill="#fff"/><path fill="none" stroke="#58b81c" stroke-width="5" d="M8 17h17q0-9-9-9t-9 9 9 9q5 0 8-4"/><path fill="none" stroke="#58b81c" stroke-width="2" d="M4 29Q1 20 12 10T29 3"/></svg></button>
  <button class="task" aria-label="图纸"><svg viewBox="0 0 32 32"><rect width="32" height="32" rx="6" fill="#2468ff"/><path fill="#fff" d="M5 13L20 5l7 4v5l-6-1-1 13h-5V13l-8 4z"/></svg></button>
  <button class="task active" aria-label="钢结构计量"><svg viewBox="0 0 32 32"><rect width="32" height="32" rx="6" fill="#e6f8f8"/><use href="#beam" x="8" y="5" width="16" height="22"/></svg></button>
  <svg class="swoosh" viewBox="0 0 90 39" preserveAspectRatio="none"><path fill="url(#glow)" d="M0 0h20q34 14 60 39H58Q34 14 0 0z"/></svg>
  <div class="tray">
    <i class="grip"></i>
    <svg viewBox="0 0 16 16"><path fill="none" stroke="#ccc" d="M6 5q0-3 3-2t4-3"/><rect y="6" width="16" height="9" rx="1" fill="#ddd"/><path stroke="#666" stroke-dasharray="2 1" d="M2 8.500h12M2 10.500h12M4 13h8"/></svg>
    <svg viewBox="0 0 16 16"><circle cx="8" cy="8" r="7" fill="#1020b0" stroke="#cde"/><text x="8" y="12" class="qm">?</text></svg>
    <svg viewBox="0 0 16 24"><path fill="none" stroke="#fff" d="M4 5h5v5H4zM7 5V2h5v5H9"/><path fill="#fff" d="M5 17h6l-3 4z"/></svg>
    <svg viewBox="0 0 16 16"><circle cx="8" cy="8" r="7.500" fill="#4fbf2a"/><path fill="none" stroke="#fff" stroke-width="2" d="M4 8.500h8q0-4-4-4t-4 4 4 4q2 0 3-1.500"/></svg>
    <svg viewBox="0 0 16 16"><path fill="#999" d="M2 0h5v4h1v9H1V4h1z"/><circle cx="11" cy="11" r="5" fill="#2cab2c"/><path fill="none" stroke="#fff" stroke-width="2" d="M8 11l2 2 4-4"/></svg>
    <svg viewBox="0 0 16 16"><path fill="#c9b9a8" d="M1 5h3l6-5v16l-6-5H1z"/><path fill="none" stroke="#e02c10" stroke-width="2" d="M11 4q3 4 0 8M8 3v10"/></svg>
    <svg viewBox="0 0 16 16"><circle cx="8" cy="8" r="7.500" fill="#f8dc10"/><path stroke="#2a8c1c" stroke-width="3" d="M8 3v10M3 8h10"/></svg>
    <svg viewBox="0 0 16 16"><rect width="16" height="16" rx="2" fill="#fca41c"/><path fill="none" stroke="#fff" stroke-width="2" d="M3 10q2 3 4 0l3-4q3-3 3 1 0 4-4 4M4 6q2-3 4-1"/></svg>
    <svg viewBox="0 0 16 16"><rect width="16" height="16" rx="2" fill="#fff"/><path fill="#1a78e0" d="M2 7l6-6 6 6-3 1 2 3-5-3-5 1z"/><path fill="#f88c1c" d="M3 11h4v3H3zM9 12h5v3H9z"/></svg>
    <svg viewBox="0 0 32 32"><path fill="url(#gblue)" d="M17 4q4-1 10-4-1 7-6 9-9 0-9 8 0 6 6 6 4 0 5-4l-5-1q4-4 11-3 0 16-12 17Q3 32 3 18 4 6 17 4z"/></svg>
    <svg viewBox="0 0 16 16"><path fill="#fff" d="M1 12h2v2H1zM4 10h2v4H4zM7 8h2v6H7zM10 5h2v9h-2zM13 2h2v12h-2z"/></svg>
    <svg viewBox="0 0 16 16"><path fill="#fff" d="M1 5h3l4-4v14l-4-4H1z"/><path fill="none" stroke="#fff" d="M10 5q2 3 0 6M12 3q4 5 0 10"/></svg>
    <div class="clock"><time>9:19</time><time>2024/7/26</time></div>
    <button class="ime" aria-label="展开">▸</button>
    <button class="desk" aria-label="显示桌面"></button>
  </div>
</div>
<script src="script.js"></script>
</body>
</html>
```
FILE: script.js
```js
// Layer groups: [title, shown, name box locked, children]; a null title continues a group scrolled out of view.
const groups = [
  [null, true, true, ['天窗架', '顺轨桁架', '横轨桁架', '桁架柱', '屋盖', '网壳', '女儿墙柱', '异形构件', '组合门架', '网架单元', '钢管束', '自定义...']],
  ['配件', true, false, ['钢板', '螺栓', '栓钉', '锚栓', '抗剪键', '型钢配件', '预埋件', '孔洞']],
  ['面板', false, false, ['屋面板', '墙面板', '楼承板', '桁架楼...', '采光板', '走道板', '平台板', '自定义...']],
  ['其它', true, true, ['尺寸标注', '辅助线']]
];
const row = (name, cls, shown, locked, lead) => `<tr class="${cls}"><td>${lead}${name}</td>
  <td><input type="checkbox" aria-label="${name} 显示图元"${shown ? ' checked' : ''}></td>
  <td><input type="checkbox" aria-label="${name} 显示名称"${locked ? ' disabled' : ''}></td></tr>`;
document.getElementById('layers').innerHTML = groups.map(([title, shown, locked, kids], g) => {
  const last = g === groups.length - 1;
  const head = title ? row(title, 'parent', shown, locked, '<button class="box" aria-label="折叠"></button>') : '';
  return head + kids.map((kid, i) =>
    row(kid, 'kid' + (i === kids.length - 1 ? ' end' : '') + (last ? ' tail' : ''), shown, locked, '')).join('');
}).join('');
```
FILE: styles.css
```css
* { box-sizing: border-box; }
body {
  margin: 0; height: 100vh; display: flex; flex-direction: column; overflow: hidden;
  font: 12px/16px "Noto Sans", "Noto Sans CJK SC", sans-serif; color: #2b2b2b; background: #fff;
  --acc: #1a73e8; --ink: #4a5468; --light: #d3e5fb;
}
button, input, select { font: inherit; color: inherit; margin: 0; }
button { border: 0; background: none; padding: 0; white-space: nowrap; }
svg { width: 16px; height: 16px; flex: none; color: #6a6a6a; }
svg.dn { width: 6px; height: 4px; }
.defs { position: absolute; width: 0; height: 0; }
h1, h2, ul { margin: 0; padding: 0; font-weight: normal; font-size: 12px; list-style: none; }

.k { fill: none; stroke: var(--ink); }
.a { fill: none; stroke: var(--acc); }
.g { fill: none; stroke: #a8a8a8; }
.r { fill: none; stroke: #d81c1c; }
.n { fill: none; stroke: #3b8fe8; }
.nf { fill: #bcd9f8; }
.w { stroke-width: 2; }
symbol[viewBox="0 0 16 16"] .w, symbol[viewBox="0 0 22 22"] .w { stroke-width: 1; }
.lf { fill: var(--light); }
.s { fill: var(--acc); }
.kf { fill: var(--ink); }
.mini { font: bold 6px "Noto Sans", sans-serif; fill: var(--acc); }
.off { --acc: #b8b8b8; --ink: #b8b8b8; --light: #fff; color: #b0b0b0; }
.off svg { color: #b8b8b8; }

.title { height: 41px; flex: none; display: flex; border-bottom: 1px solid #e6e6e6; position: relative; }
.logo { width: 24px; height: 30px; margin: 3px 0 0 11px; }
.title-main { margin-left: 15px; }
.quick { display: flex; align-items: center; height: 20px; padding-left: 4px; gap: 10px; }
.quick button { display: flex; align-items: center; }
.has-arrow { gap: 5px; margin-right: -1px; }
.tabs { display: flex; height: 20px; margin-top: 2px; }
.tabs button { padding: 0 13px; height: 19px; }
.tabs .on { background: #1890ff; color: #fff; border-radius: 10px; }
.title h1 { position: absolute; inset: 3px 0 auto; text-align: center; pointer-events: none; }
.title-right { margin-left: auto; position: relative; width: 450px; }
.winbtns { display: flex; justify-content: flex-end; gap: 23px; height: 20px; padding-right: 13px; }
.winbtns svg { width: 12px; height: 12px; fill: none; stroke: #555; }
.userbar { display: flex; align-items: center; height: 19px; margin-top: 1px; padding-right: 5px; }
.userbar button { display: flex; align-items: center; }
.search { display: flex; align-items: center; width: 320px; height: 18px; border: 1px solid #ddd; border-radius: 2px; padding: 0 4px; }
.search input { flex: 1; border: 0; outline: 0; padding: 0; min-width: 0; height: 16px; }
::placeholder { color: #9a9a9a; opacity: 1; }
.user { margin: 0 16px 0 6px; }
.help { font-size: 16px; gap: 2px; margin-right: 9px; }
.userbar button + button + button { margin-right: 7px; }
.userbar button:last-child { margin-right: 0; }
.bubble { position: absolute; left: -273px; top: 13px; width: 263px; height: 34px; line-height: 34px; padding-left: 8px; background: #0f91fb; color: #fff; border-radius: 3px; text-decoration: none; white-space: nowrap; z-index: 3; }
.bubble::after { content: ""; position: absolute; right: -5px; top: 12px; border: 5px solid transparent; border-left-color: #0f91fb; border-right: 0; }

.ribbon { height: 99px; flex: none; display: flex; padding-top: 2px; border-bottom: 1px solid #d8d8d8; }
.group { display: flex; flex-direction: column; height: 94px; border-right: 1px solid #dcdcdc; position: relative; }
.body { display: flex; height: 70px; padding-top: 1px; }
.cmds { display: grid; grid-template-rows: repeat(3, 23px); }
.cmds button, .menu button { display: flex; align-items: center; gap: 4px; }
.cmds .dn { margin-left: 2px; }
.cmds .tight .dn { margin: 0; }
.big { display: flex; flex-direction: column; align-items: center; padding-top: 2px; }
.big svg:first-child { width: 32px; height: 32px; margin-bottom: 4px; }
.cap { display: flex; align-items: center; justify-content: center; gap: 6px; height: 24px; padding-top: 3px; }
.cap.low { padding-top: 4px; }
.cap .dn, .tree .dn { width: 8px; height: 5px; }
.g1 { width: 134px; } .g1 .big { width: 44px; margin: 0 1px 0 6px; }
.g2 { width: 247px; } .g2 .big { margin: 0 4px 0 7px; } .g2 .cmds { grid-template-columns: 79px auto; }
.g3 { width: 312px; } .g3 .cmds { grid-template-columns: 87px 103px auto; margin-left: 6px; }
.g4 { width: 153px; } .g4 .cmds { grid-template-columns: 22px 33px auto; margin-left: 6px; }
.g5 { width: 67px; } .g5 .cmds { grid-template-columns: 24px auto; margin-left: 5px; }
.sq { width: 21px; justify-content: center; }
.sq.on { background: #c5dcf6; border-radius: 3px; }
.g6 { width: 88px; }
.g6 .big { width: 74px; height: 67px; margin: 2px 0 0 6px; padding-top: 0; border: 1px solid #bcdcfb; border-radius: 3px; background: linear-gradient(#fff 37px, #c9dffa 37px); }
.g6 .big svg:first-child { margin-bottom: 3px; }
.menu { position: absolute; left: 6px; top: 73px; z-index: 5; width: 167px; height: 50px; padding: 1px 3px; background: #fff; border: 1px solid #b0b0b0; box-shadow: 2px 2px 6px #0006; }
.menu button { gap: 9px; height: 23px; }
.g7 { width: 265px; } .g7 .big { margin-left: 7px; } .g7 .big:first-child { margin-left: 10px; } .g7 .cmds { margin-left: 4px; }
.g7 .cap { padding-left: 4px; }

.options { height: 26px; flex: none; display: flex; align-items: center; background: #f0f0f0; padding: 0 2px; color: #8a8a8a; }
.combo { appearance: none; width: 99px; height: 22px; margin-right: 3px; padding: 0 4px; border: 1px solid #ddd; border-radius: 3px; color: #2b2b2b; outline: 0;
  background: #fff url("data:image/svg+xml,%3Csvg xmlns='http://www.w3.org/2000/svg' width='6' height='4'%3E%3Cpath fill='%23555' d='M0 0h6L3 4z'/%3E%3C/svg%3E") no-repeat right 4px center; }
.combo.small { width: 58px; padding: 0 3px; }
.chk { display: flex; align-items: center; gap: 3px; color: #2b2b2b; margin: 0 3px 0 1px; }
.num { display: flex; align-items: center; }
.num input { width: 80px; height: 22px; border: 1px solid #e0e0e0; background: #fff; padding: 0 2px; color: #2b2b2b; }
.num + span { margin-right: 1px; }
.spin input { width: 61px; border-radius: 3px; color: #aaa;
  background: #fff url("data:image/svg+xml,%3Csvg xmlns='http://www.w3.org/2000/svg' width='6' height='14'%3E%3Cpath fill='%23555' d='M0 4h6L3 0zM0 10h6L3 14z'/%3E%3C/svg%3E") no-repeat right 3px center; }
input[type=checkbox] { appearance: none; flex: none; width: 14px; height: 14px; border: 1px solid #8a8a8a; border-radius: 2px; background: #fff; display: block; position: relative; }
input[type=checkbox]:disabled { background: #efefef; }
input[type=checkbox]:checked { background: #2a7de8; border-color: #2a7de8; }
input[type=checkbox]:checked::after { content: ""; position: absolute; left: 4px; top: 1px; width: 4px; height: 8px; border: solid #fff; border-width: 0 2px 2px 0; transform: rotate(40deg); }

main { flex: 1; min-height: 0; display: flex; background: #fbfbfb; }
.panel { background: #fff; border: 1px solid #d8d8d8; display: flex; flex-direction: column; }
.strip { height: 11px; flex: none; background: #e6e6e6; border-bottom: 1px solid #d8d8d8; display: flex; justify-content: flex-end; padding-right: 2px; }
.strip button { font-size: 14px; line-height: 10px; color: #999; width: 10px; }
.panel h2 { height: 23px; line-height: 22px; flex: none; background: #f1f1f1; border-bottom: 1px solid #d8d8d8; padding-left: 8px; color: #7a7a7a; }
.nav { width: 195px; margin-right: 4px; }
.navtools { display: flex; align-items: center; gap: 4px; height: 27px; padding-left: 1px; border-bottom: 1px solid #d8d8d8; }
.navtools button { width: 24px; height: 22px; display: flex; align-items: center; justify-content: center; }
.navtools .on { background: #c5dcf6; border-radius: 3px; }
.navlist { display: flex; flex-direction: column; gap: 3px; padding-top: 4px; }
.navlist button { height: 25px; display: flex; align-items: center; gap: 13px; padding-left: 17px; }
.navlist svg { width: 19px; height: 18px; }
.navlist .cat { background: #ececec; padding-left: 3px; }
.navlist .sel { background: #d3e7ff; }

.mid { width: 315px; display: flex; flex-direction: column; gap: 5px; }
.comps { flex: 1; }
.props { height: 353px; }
.ptabs { height: 24px; flex: none; display: flex; background: #f1f1f1; border-bottom: 1px solid #d8d8d8; }
.ptabs button { padding: 0 9px 0 8px; background: #dedede; color: #808080; }
.ptabs .on { background: #f1f1f1; color: #222; font-weight: 500; }
.ctools { display: flex; align-items: center; gap: 9px; height: 27px; flex: none; padding-left: 3px; border-bottom: 1px solid #e0e0e0; }
.ctools button { display: flex; align-items: center; gap: 4px; }
.ctools .dn { margin-left: 2px; }
.csearch { display: flex; align-items: center; height: 20px; flex: none; border-bottom: 1px solid #e0e0e0; padding: 0 4px 0 2px; }
.csearch input { flex: 1; border: 0; outline: 0; padding: 0; height: 16px; }
.tree { padding: 2px 0 0 12px; line-height: 24px; }
.tree .dn { margin: 0 4px 3px 0; vertical-align: middle; }
.tree ul { padding-left: 20px; }
.tree .leaf { margin-left: 8px; height: 24px; }
.leaf span { display: block; width: 77px; height: 20px; line-height: 20px; padding-left: 3px; border-radius: 2px; margin-top: 2px; }
.leaf .sel { background: #c3d9f2; }

table { border-collapse: separate; border-spacing: 0; table-layout: fixed; width: 312px; }
th, td { height: 21px; padding: 0; border: solid #dcdcdc; border-width: 0 1px 1px 0; font-weight: normal; white-space: nowrap; line-height: 16px; overflow: hidden; }
td input { margin: 0 auto; }
.hl { background: #82bbfb; color: #fff; font-weight: bold; border-color: #6aa8ee; }
.props td { padding-left: 3px; }
.props td:first-child { text-align: center; padding: 0; }
.props td:last-child { padding: 0; }
.c-no { width: 22px; } .c-name { width: 81px; } .c-add { width: 41px; }
.blue { color: #1a5cff; }
.box { width: 13px; height: 13px; border: 1px solid #8a8a8a; border-radius: 2px; margin-right: 6px; vertical-align: -1px;
  background: linear-gradient(#444, #444) center / 5px 1px no-repeat #fff; }
.box.plus { margin-right: 5px; background: linear-gradient(#444, #444) center / 5px 1px no-repeat, linear-gradient(#444, #444) center / 1px 5px no-repeat #fff; vertical-align: 0; }

.splitter { width: 4px; display: flex; align-items: center; position: relative; }
.splitter button { width: 4px; height: 100px; background: #5d6672; color: #c8ccd2; font-size: 8px; overflow: hidden; line-height: 100px; }

.canvas { flex: 1; min-width: 0; position: relative; overflow: hidden; background: #21282f; }
.scene { width: 100%; height: 100%; display: block; }
.lab { font-size: 17px; fill: #fff; }
.mid-t { text-anchor: middle; }
.ax { font-size: 14px; text-anchor: middle; }
.z { fill: #0000ff; } .x { fill: #ff0000; }
.hint { position: absolute; height: 21px; line-height: 17px; padding: 0 4px; background: #989898; border: 2px solid #111; color: #111; box-shadow: 2px 3px 5px #0008; white-space: nowrap; }
.h1 { left: 463px; top: 7px; padding: 0 5px; }
.h2 { left: 463px; top: 32px; width: 57px; padding: 0 1px; }
.h3 { left: 543px; top: 32px; width: 80px; padding: 0 1px; }
.viewbar { position: absolute; right: 0; top: 0; width: 33px; height: 216px; background: #fff; border-radius: 2px; display: flex; flex-direction: column; align-items: center; padding: 8px 2px 0 0; }
.viewbar button { height: 29px; position: relative; }
.viewbar svg { width: 22px; height: 22px; display: block; }
.viewbar .dn { width: 7px; height: 4px; margin: 0 0 6px; }
.d3 b { position: absolute; left: 4px; top: 13px; font-size: 8px; line-height: 8px; color: var(--acc); }
.fillcube { --ink: #1a73e8; }
.fillcube .k, .fillcube svg { fill: var(--light); }
.viewbar hr { width: 22px; margin: 0 0 4px; border: 0; border-top: 1px solid #555; }

.disp { width: 216px; }
.dtabs { display: flex; align-items: flex-end; gap: 3px; height: 27px; padding-left: 3px; border-bottom: 1px solid #d8d8d8; }
.dtabs button { height: 21px; width: 60px; background: #dedede; border-radius: 4px 4px 0 0; }
.dtabs .on { width: 62px; height: 24px; background: #fff; color: #1a73e8; border: 1px solid #d8d8d8; border-bottom: 0; margin-bottom: -1px; }
.dbox { margin: 2px 2px 0; border: 1px solid #d8d8d8; flex: 1; min-height: 0; display: flex; flex-direction: column; }
.dview { display: flex; flex: 1; min-height: 0; }
.dclip { flex: 1; overflow: hidden; }
.dclip table { width: 226px; border-left: 1px solid #dcdcdc; }
.left { text-align: left; padding-left: 7px; }
.d1 { width: 100px; } .d2 { width: 63px; }
.vbar { width: 15px; padding: 386px 4px 4px 3px; display: flex; }
.vbar i { flex: 1; background: #c9c9c9; border-radius: 4px; }
.hbar { height: 22px; display: flex; align-items: center; color: #4a5468; padding: 8px 20px 0 4px; }
.hbar i { width: 110px; height: 8px; background: #c9c9c9; border-radius: 4px; margin: 0 auto 0 4px; }
.kid td:first-child { padding-left: 40px; background: linear-gradient(#dcdcdc, #dcdcdc) 7px 0 / 1px 100% no-repeat, linear-gradient(#dcdcdc, #dcdcdc) 17px 0 / 1px 100% no-repeat, linear-gradient(#dcdcdc, #dcdcdc) 17px 10px / 16px 1px no-repeat; }
.kid.end td:first-child { background-size: 1px 100%, 1px 10px, 16px 1px; }
.kid.tail td:first-child { background-size: 0 0, 1px 100%, 16px 1px; }
.kid.tail.end td:first-child { background-size: 0 0, 1px 10px, 16px 1px; }
.parent td:first-child { padding-left: 11px; background: linear-gradient(#dcdcdc, #dcdcdc) 7px 0 / 1px 100% no-repeat; }
.reset { align-self: flex-end; width: 90px; height: 26px; margin: 7px 8px 6px 0; border: 1px solid #c8c8c8; border-radius: 3px; }

.status { height: 33px; flex: none; display: flex; align-items: center; background: #fcfcfc; padding: 0 2px 2px; white-space: nowrap; }
.st1 { width: 90px; } .st2 { width: 110px; }
.snaps { display: flex; gap: 3px; margin-right: 3px; }
.snaps button { height: 25px; min-width: 25px; display: flex; align-items: center; justify-content: center; gap: 8px; border: 1px solid #9a9a9a; border-radius: 3px; background: #fff; }
.snaps .on { width: 36px; gap: 6px; background: #d8e7fb; border-color: #3b8bf0; }
.status .combo { width: 100px; height: 26px; padding: 0 3px; }
.prompt { display: flex; align-items: center; gap: 3px; margin-left: 9px; }

.taskbar { height: 39px; flex: none; display: flex; align-items: stretch; position: relative; border-top: 1px solid #16324a; box-shadow: inset 0 1px #a9cfe6;
  background: linear-gradient(100deg, #1f5f8c 0, #2f7fae 16%, #49a3d0 20%, #3f9bd0 35%, #3c98d0 52%, #2b7fc4 58%, #2573b8 68%, #1f5fa8 76%, #1a4b82 79%, #16406f 100%); }
.start { width: 54px; } .start svg { width: 38px; height: 38px; }
.grip { width: 8px; margin: 4px 9px 4px 4px; background: radial-gradient(#0c2c48 1px, transparent 1px) 0 0 / 3px 4px; }
.task { width: 59px; margin-right: 3px; border: 1px solid #16435f; border-radius: 3px; background: linear-gradient(135deg, #a9d0e6, #4a97c0); box-shadow: inset 0 0 0 1px #cfe6f2aa; }
.task svg { width: 32px; height: 32px; display: block; margin: 0 auto; }
.task.active { background: linear-gradient(135deg, #e6f3f8, #a8d2de); }
.swoosh { position: absolute; left: 68%; width: 90px; height: 38px; }
.tray { margin-left: auto; display: flex; align-items: center; gap: 8px; position: relative; }
.tray .grip { align-self: stretch; margin-right: 0; }
.tray svg:nth-of-type(3) { height: 24px; }
.qm { font: bold 11px "Noto Sans", sans-serif; fill: #fff; text-anchor: middle; }
.clock { width: 74px; display: flex; flex-direction: column; align-items: center; color: #fff; line-height: 18px; margin: 0 5px 0 0; }
.ime { width: 18px; height: 15px; background: #fff; color: #222; line-height: 14px; }
.desk { width: 15px; align-self: stretch; border: 1px solid #0c2c48; background: linear-gradient(#7c9cb8, #2f5f8c); box-shadow: inset 0 0 0 1px #8fb0cc88; }
```
